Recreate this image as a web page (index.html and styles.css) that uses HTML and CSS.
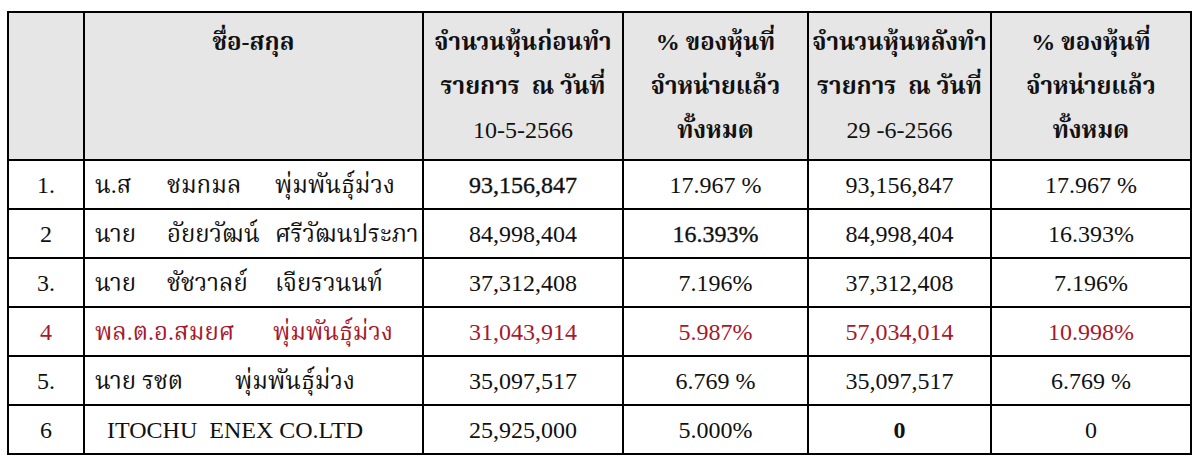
FILE: index.html
```html
<!DOCTYPE html>
<html lang="th">
<head>
<meta charset="utf-8">
<link rel="stylesheet" href="styles.css">
</head>
<body>
<table class="shares">
  <colgroup>
    <col class="c-no"><col class="c-name"><col class="c-a"><col class="c-b"><col class="c-c"><col class="c-d">
  </colgroup>
  <thead>
    <tr>
      <th></th>
      <th class="h-name">ชื่อ-สกุล</th>
      <th><div>จำนวนหุ้นก่อนทำ</div><div>รายการ&nbsp; ณ วันที่</div><div class="date">10-5-2566</div></th>
      <th><div>% ของหุ้นที่</div><div>จำหน่ายแล้ว</div><div>ทั้งหมด</div></th>
      <th><div>จำนวนหุ้นหลังทำ</div><div>รายการ&nbsp; ณ วันที่</div><div class="date">29 -6-2566</div></th>
      <th><div>% ของหุ้นที่</div><div>จำหน่ายแล้ว</div><div>ทั้งหมด</div></th>
    </tr>
  </thead>
  <tbody>
    <tr>
      <td>1.</td>
      <td class="name"><span class="pfx">น.ส</span><span class="first">ชมกมล</span><span>พุ่มพันธุ์ม่วง</span></td>
      <td class="semi">93,156,847</td><td>17.967 %</td><td>93,156,847</td><td>17.967 %</td>
    </tr>
    <tr>
      <td>2</td>
      <td class="name"><span class="pfx">นาย</span><span class="first">อัยยวัฒน์</span><span>ศรีวัฒนประภา</span></td>
      <td>84,998,404</td><td class="semi">16.393%</td><td>84,998,404</td><td>16.393%</td>
    </tr>
    <tr>
      <td>3.</td>
      <td class="name"><span class="pfx">นาย</span><span class="first">ชัชวาลย์</span><span>เจียรวนนท์</span></td>
      <td>37,312,408</td><td>7.196%</td><td>37,312,408</td><td>7.196%</td>
    </tr>
    <tr class="red">
      <td>4</td>
      <td class="name"><span class="pfx-long">พล.ต.อ.สมยศ</span><span>พุ่มพันธุ์ม่วง</span></td>
      <td>31,043,914</td><td>5.987%</td><td>57,034,014</td><td>10.998%</td>
    </tr>
    <tr>
      <td>5.</td>
      <td class="name"><span class="pfx-mid">นาย รชต</span><span>พุ่มพันธุ์ม่วง</span></td>
      <td>35,097,517</td><td>6.769 %</td><td>35,097,517</td><td>6.769 %</td>
    </tr>
    <tr>
      <td>6</td>
      <td class="name co">ITOCHU&nbsp; ENEX CO.LTD</td>
      <td>25,925,000</td><td>5.000%</td><td class="bold">0</td><td>0</td>
    </tr>
  </tbody>
</table>
</body>
</html>
```
FILE: styles.css
```css
html, body {
  margin: 0;
  padding: 0;
  background: #ffffff;
}

body {
  font-family: "Liberation Serif", "Norasi", "Tlwg Typo", "Noto Serif Thai", serif;
  color: #111111;
}

.shares {
  border-collapse: collapse;
  margin: 11px 0 0 7px;
  width: 1183px;
  table-layout: fixed;
  font-size: 24px;
}

.c-no { width: 76px; }
.c-name { width: 339px; }
.c-a { width: 200px; }
.c-b { width: 185px; }
.c-c { width: 183px; }
.c-d { width: 200px; }

.shares th,
.shares td {
  border: 2.5px solid #000000;
  text-align: center;
  padding: 0;
}

.shares th {
  background: #e6e6e6;
  height: 139px;
  vertical-align: top;
  font-weight: bold;
  line-height: 44px;
  padding-top: 7px;
}

.shares th .date {
  font-weight: normal;
}

.shares td {
  height: 47px;
  vertical-align: middle;
  line-height: 30px;
}

.shares td.name {
  text-align: left;
  padding-left: 10px;
  white-space: nowrap;
}

.shares td.co {
  padding-left: 22px;
}

.pfx { display: inline-block; width: 72px; }
.first { display: inline-block; width: 108px; }
.pfx-long { display: inline-block; width: 178px; }
.pfx-mid { display: inline-block; width: 140px; }

.shares tr.red td {
  color: #a8182c;
}

.shares td.semi {
  -webkit-text-stroke: 0.35px #111111;
}

.shares td.bold {
  font-weight: bold;
}
```
